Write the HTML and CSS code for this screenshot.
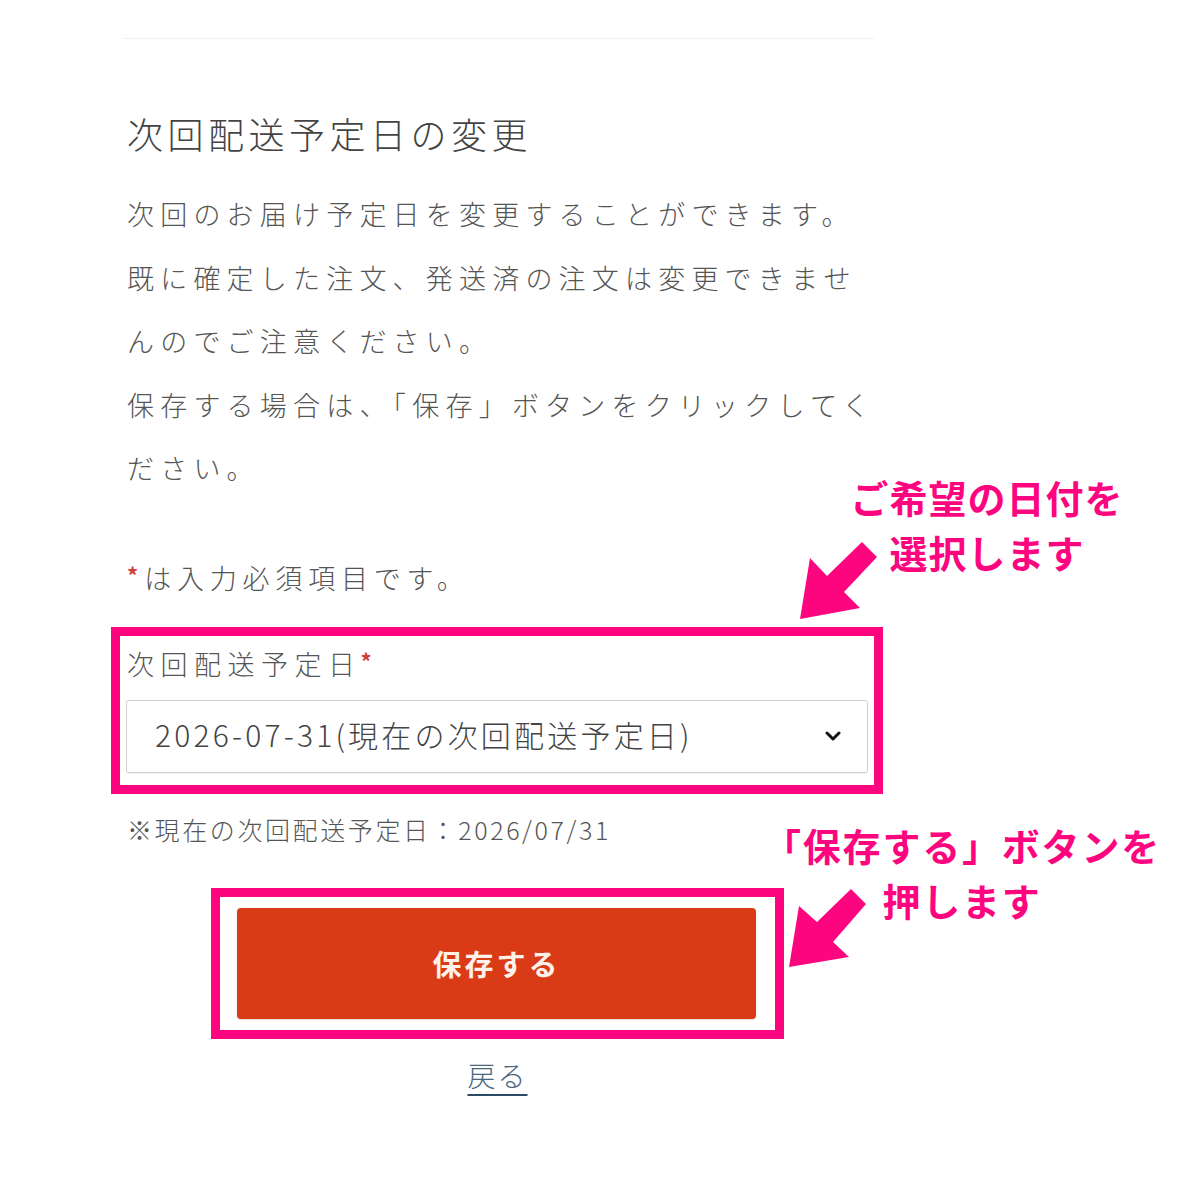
FILE: index.html
```html
<!DOCTYPE html>
<html lang="ja">
<head>
<meta charset="utf-8">
<title>次回配送予定日の変更</title>
<link rel="stylesheet" href="styles.css">
</head>
<body>
<div class="canvas">
  <main class="page">
    <div class="rule"></div>
    <h1 class="title">次回配送予定日の変更</h1>
    <p class="lead">次回のお届け予定日を変更することができます。<br>既に確定した注文、発送済の注文は変更できませ<br>んのでご注意ください。<br>保存する場合は、「保存」ボタンをクリックしてく<br>ださい。</p>
    <p class="required"><span class="req">*</span>は入力必須項目です。</p>

    <div class="field highlight">
      <label class="field-label">次回配送予定日<span class="req">*</span></label>
      <div class="select">
        <span class="select-value">2026-07-31(現在の次回配送予定日)</span>
        <svg class="chevron" width="16" height="10" viewBox="0 0 16 10"><path d="M2 2 L8 8 L14 2" fill="none" stroke="#111" stroke-width="3" stroke-linecap="round" stroke-linejoin="round"/></svg>
      </div>
    </div>

    <p class="note">※現在の次回配送予定日：2026/07/31</p>

    <div class="actions">
      <div class="btn-frame highlight">
        <button class="btn-save" type="button">保存する</button>
      </div>
      <a class="back" href="#">戻る</a>
    </div>
  </main>

  <div class="callout callout-date">ご希望の日付を<br>選択します</div>
  <svg class="arrow arrow-date" width="100" height="100" viewBox="0 0 100 100"><polygon points="10,89 70,78 54,62 87,27 72,12 37,46 20,28" fill="#fe0580"/></svg>

  <div class="callout callout-save">「保存する」ボタンを<br>押します</div>
  <svg class="arrow arrow-save" width="100" height="100" viewBox="0 0 100 100"><polygon points="9,87 69,77 53,62 86,24 71,9 37,42 19,26" fill="#fe0580"/></svg>
</div>
</body>
</html>
```

FILE: styles.css
```css
html, body {
  margin: 0;
  padding: 0;
  background: #ffffff;
}

body {
  font-family: "Noto Sans CJK JP", "Noto Sans", sans-serif;
  color: #555;
}

.canvas {
  position: relative;
  width: 1200px;
  height: 1200px;
  overflow: hidden;
}

.page {
  margin-left: 127px;
  width: 741px;
  padding-top: 38px;
}

.rule {
  margin-left: -4px;
  width: 751px;
  border-top: 1px solid #f1f1f1;
}

.title {
  margin: 72px 0 0;
  font-size: 36px;
  line-height: 44px;
  font-weight: 300;
  letter-spacing: 4.5px;
  color: #444;
}

.lead {
  margin: 27px 0 0;
  font-size: 27px;
  line-height: 63.5px;
  font-weight: 300;
  letter-spacing: 6.2px;
  white-space: nowrap;
  color: #555;
}

.required {
  margin: 58px 0 0;
  font-size: 27px;
  line-height: 40px;
  font-weight: 300;
  letter-spacing: 5.8px;
  color: #555;
}

/* required marker: raised, without growing the line box */
.req {
  color: #d0403a;
  font-size: 22px;
  line-height: 0;
  font-weight: 700;
  vertical-align: 5px;
}

.required .req {
  letter-spacing: 6px;
}

.highlight {
  border: 9px solid #fe0580;
}

.field {
  margin: 29px 0 0 -16px;
  width: 742px;
  padding: 8px 6px 12px 6px;
}

.field-label {
  display: block;
  padding-left: 1px;
  font-size: 27px;
  line-height: 40px;
  font-weight: 300;
  letter-spacing: 6.5px;
  color: #555;
}

.field-label .req {
  margin-left: -1px;
  letter-spacing: 0;
}

.select {
  margin-top: 16px;
  height: 71px;
  border: 1px solid #cfcfcf;
  border-radius: 3px;
  display: flex;
  align-items: center;
  justify-content: space-between;
  padding: 0 26px 0 28px;
  box-shadow: 0 1px 1px rgba(0, 0, 0, 0.06);
}

.select-value {
  font-size: 30px;
  line-height: 40px;
  letter-spacing: 3.2px;
  font-weight: 300;
  color: #444;
  margin-top: -4px;
}

.chevron {
  display: block;
}

.note {
  margin: 17px 0 0;
  font-size: 25px;
  line-height: 36px;
  font-weight: 300;
  letter-spacing: 2.6px;
  color: #555;
}

.actions {
  display: flex;
  flex-direction: column;
  align-items: center;
}

.btn-frame {
  margin-top: 41px;
  padding: 11px 19px 11px 17px;
}

.btn-save {
  display: block;
  width: 519px;
  height: 111px;
  border: none;
  border-radius: 4px;
  background: #d93b17;
  color: #fdf1ea;
  font-family: "Noto Sans CJK JP", "Noto Sans", sans-serif;
  font-size: 29px;
  font-weight: 700;
  letter-spacing: 3px;
  box-shadow: 0 1px 2px rgba(0, 0, 0, 0.15);
}

.back {
  margin-top: 16px;
  font-size: 28px;
  line-height: 40px;
  font-weight: 300;
  letter-spacing: 2px;
  color: #4a6780;
  text-decoration: underline;
  text-decoration-color: #2c4a64;
  text-decoration-thickness: 2px;
  text-underline-offset: 7px;
}

.callout {
  position: absolute;
  text-align: center;
  font-size: 38px;
  line-height: 55px;
  font-weight: 700;
  letter-spacing: 1px;
  color: #fe0580;
  white-space: nowrap;
}

.callout-date {
  left: 830px;
  top: 469px;
  width: 314px;
}

.callout-save {
  left: 762px;
  top: 817px;
  width: 400px;
  letter-spacing: 1.8px;
}

.arrow {
  position: absolute;
  display: block;
}

.arrow-date {
  left: 790px;
  top: 530px;
}

.arrow-save {
  left: 780px;
  top: 880px;
}
```
